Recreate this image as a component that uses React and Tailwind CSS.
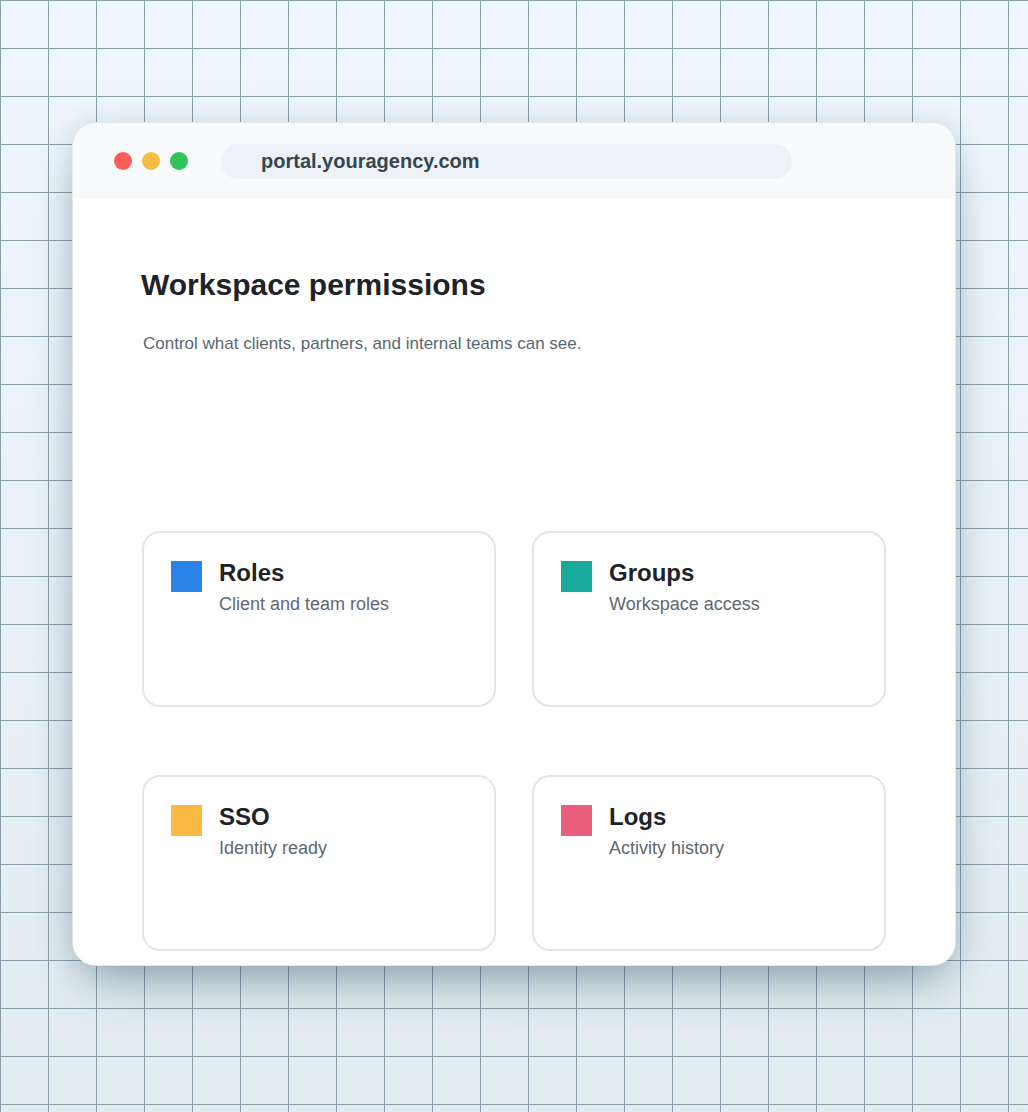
import React from 'react';

const cards = [
  { title: 'Roles', sub: 'Client and team roles', color: 'bg-[#2a83e6]' },
  { title: 'Groups', sub: 'Workspace access', color: 'bg-[#18a99b]' },
  { title: 'SSO', sub: 'Identity ready', color: 'bg-[#f9b942]' },
  { title: 'Logs', sub: 'Activity history', color: 'bg-[#e9607e]' },
];

export default function App() {
  return (
    <div
      className="min-h-[1112px] w-full pt-[122px] px-[72px] font-['Liberation_Sans',Arial,sans-serif] bg-[linear-gradient(to_right,#8a9dab_1px,transparent_1px),linear-gradient(to_bottom,#8a9dab_1px,transparent_1px),linear-gradient(to_bottom,#eff7fe,#e1ecf1)] bg-size-[48px_48px,48px_48px,100%_100%]"
    >
      {/* Browser window */}
      <div className="h-[844px] w-[884px] overflow-hidden rounded-[24px] border border-[#e3e8ec] bg-white shadow-[0_24px_50px_-12px_rgba(40,70,90,0.45),0_0_28px_rgba(40,70,90,0.12)]">
        {/* Title bar */}
        <div className="flex h-[76px] items-center bg-[#f8fafc] pl-[41px]">
          <div className="flex items-center gap-[10px]">
            <span className="h-[18px] w-[18px] rounded-full bg-[#fd5d59]" />
            <span className="h-[18px] w-[18px] rounded-full bg-[#f8bb41]" />
            <span className="h-[18px] w-[18px] rounded-full bg-[#32c35a]" />
          </div>
          <div className="ml-[33px] flex h-[35px] w-[571px] items-center rounded-full bg-[#ecf2f5] pl-[40px]">
            <span className="text-[20px] font-bold text-[#354650]">portal.youragency.com</span>
          </div>
        </div>

        {/* Content */}
        <div className="px-[69px] pt-[68px]">
          <h1 className="-ml-px text-[30px] leading-[36px] font-bold text-[#1f2226]">Workspace permissions</h1>
          <p className="mt-[29px] pl-px text-[17px] leading-[24px] text-[#5b6770]">
            Control what clients, partners, and internal teams can see.
          </p>

          <div className="mt-[175px] grid grid-cols-2 gap-x-[36px] gap-y-[68px]">
            {cards.map((c) => (
              <div
                key={c.title}
                className="flex h-[176px] gap-[17px] rounded-[18px] border-2 border-[#e1e6ea] px-[27px] pt-[28px]"
              >
                <div className={`h-[31px] w-[31px] shrink-0 ${c.color}`} />
                <div className="-mt-[2px]">
                  <div className="text-[24px] leading-[28px] font-bold text-[#1f2226]">{c.title}</div>
                  <div className="mt-[5px] text-[18px] leading-[24px] text-[#5d6873]">{c.sub}</div>
                </div>
              </div>
            ))}
          </div>
        </div>
      </div>
    </div>
  );
}
